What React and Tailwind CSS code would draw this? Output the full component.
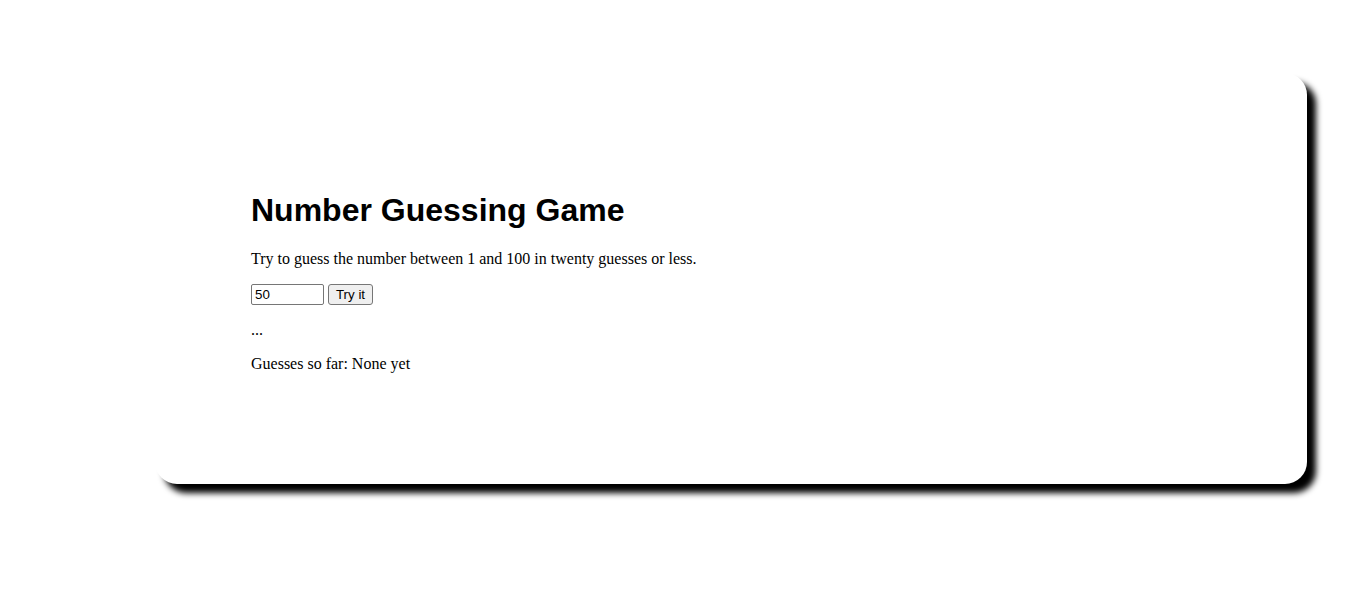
import React, { useState } from 'react';

const App = () => {
    const [guess, setGuess] = useState('50');

    return (
        <div className="min-h-screen bg-white pl-[155px] pt-[73px]">
            <div className="w-[1152px] h-[411px] bg-white rounded-[22px] shadow-[9px_9px_6px_rgba(0,0,0,1)] pl-[96px] pt-[119px] text-black">
                <h1 className="text-[32px] leading-[37px] font-bold mb-[21px] font-['Liberation_Sans',Arial,sans-serif]">
                    Number Guessing Game
                </h1>
                <div className="font-['Liberation_Serif','Times_New_Roman',serif] text-[16px] leading-[18px]">
                    <p className="mb-4">Try to guess the number between 1 and 100 in twenty guesses or less.</p>

                    {/* Guess form */}
                    <form className="flex items-center mb-4 font-['Liberation_Sans',Arial,sans-serif] text-[13.33px]" onSubmit={(e) => e.preventDefault()}>
                        <input
                            type="text"
                            value={guess}
                            onChange={(e) => setGuess(e.target.value)}
                            className="w-[73px] h-[21px] border border-[#767676] rounded-[2px] px-[3px] bg-white text-black outline-none"
                        />
                        <button
                            type="submit"
                            className="ml-[4px] w-[45px] h-[21px] bg-[#efefef] border border-[#767676] rounded-[3px] text-black flex items-center justify-center"
                        >
                            Try it
                        </button>
                    </form>

                    <p className="mb-4">...</p>
                    <p>Guesses so far: None yet</p>
                </div>
            </div>
        </div>
    );
};

export default App;
